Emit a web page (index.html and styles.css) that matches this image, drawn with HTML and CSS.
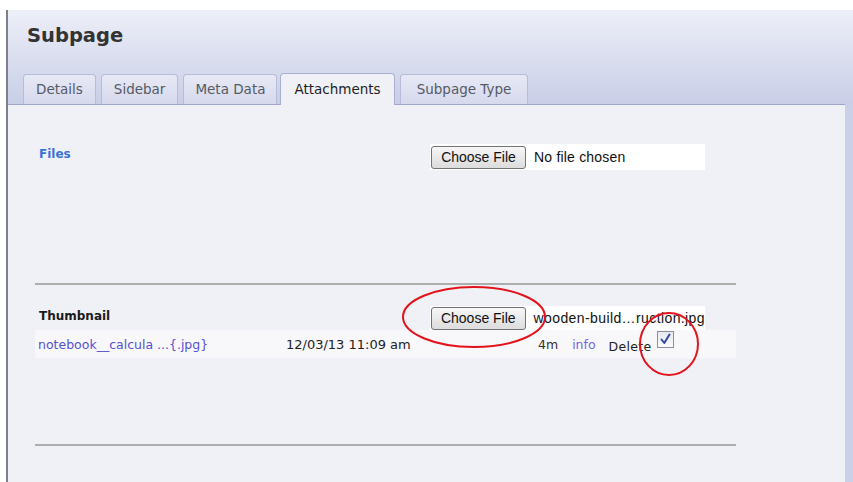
FILE: index.html
```html
<!DOCTYPE html>
<html lang="en">
<head>
<meta charset="utf-8">
<title>Subpage</title>
<link rel="stylesheet" href="styles.css">
</head>
<body>
<div class="page">
  <div class="panel">
    <header class="panel-head">
      <h1 class="title">Subpage</h1>
      <nav class="tabs">
        <a class="tab">Details</a>
        <a class="tab">Sidebar</a>
        <a class="tab">Meta Data</a>
        <a class="tab tab-active">Attachments</a>
        <a class="tab">Subpage Type</a>
      </nav>
    </header>
    <main class="panel-body">
      <section class="field field-files">
        <div class="field-row">
          <span class="field-label field-label-link">Files</span>
          <div class="file-input">
            <button class="file-btn" type="button">Choose File</button>
            <span class="file-name">No file chosen</span>
          </div>
        </div>
      </section>
      <hr class="rule rule-files">
      <section class="field field-thumb">
        <div class="field-row">
          <span class="field-label">Thumbnail</span>
          <div class="file-input file-input-short">
            <button class="file-btn" type="button">Choose File</button>
            <span class="file-name file-name-long">wooden-build…ruction.jpg</span>
          </div>
        </div>
        <div class="att-row">
          <a class="att-name">notebook__calcula ...{.jpg}</a>
          <span class="att-date">12/03/13 11:09 am</span>
          <span class="att-size">4m</span>
          <a class="att-info">info</a>
          <span class="att-delete">Delete</span>
          <span class="checkbox checked">
            <svg viewBox="0 0 15 15" width="15" height="15"><path d="M3.5 7.5 L6.3 11 L11.5 2.5" fill="none" stroke="#3448a8" stroke-width="2" stroke-linecap="round" stroke-linejoin="round"/></svg>
          </span>
        </div>
      </section>
      <hr class="rule rule-thumb">
    </main>
  </div>
</div>
<svg class="marks" viewBox="0 0 853 482" width="853" height="482">
  <ellipse cx="474" cy="317" rx="71" ry="30" fill="none" stroke="#e3131b" stroke-width="2"/>
  <ellipse cx="669" cy="344" rx="29" ry="31" fill="none" stroke="#e3131b" stroke-width="2"/>
</svg>
</body>
</html>
```

FILE: styles.css
```css
html, body {
  margin: 0;
  height: 100%;
  background: #fff;
}

body {
  position: relative;
  overflow: hidden;
  font-family: "DejaVu Sans", "Liberation Sans", sans-serif;
  color: #222;
}

.page {
  box-sizing: border-box;
  height: 482px;
  padding: 10px 0 0 6px;
}

.panel {
  height: 100%;
  display: flex;
  flex-direction: column;
  border-left: 2px solid #7b8189;
  background: #cbd0e9;
}

/* header with title and tab strip */
.panel-head {
  height: 94px;
  display: flex;
  flex-direction: column;
  padding-left: 15px;
  background: linear-gradient(#edeff8, #c9cee7);
}

.title {
  margin: 14px 0 0 4px;
  font-size: 19.5px;
  line-height: 24px;
  font-weight: bold;
  color: #333;
}

.tabs {
  margin-top: auto;
  display: flex;
  align-items: flex-end;
  gap: 5px;
  position: relative;
  z-index: 1;
}

.tab {
  box-sizing: border-box;
  height: 30px;
  padding: 0 12px;
  line-height: 29px;
  font-size: 13.5px;
  color: #555a64;
  border: 1px solid #b7bcd9;
  border-bottom: none;
  border-radius: 4px 4px 0 0;
  background: linear-gradient(#e7e9f5, #d6d9ed);
}

.tab:nth-child(3) {
  padding: 0 11px;
}

.tab:nth-child(5) {
  margin-left: 1px;
  padding: 0 16px;
}

.tab-active {
  height: 32px;
  margin: 0 -1px -1px -2px;
  line-height: 31px;
  padding: 0 13px;
  color: #1e1e1e;
  border-color: #a9afd1;
  background: #f0f1f7;
}

/* content area */
.panel-body {
  flex: 1;
  margin-right: 8px;
  padding-left: 27px;
  background: #f0f1f7;
  border-top: 1px solid #a0a6ca;
}

.field {
  width: 701px;
}

.field-row {
  display: flex;
  align-items: flex-start;
}

.field-files .field-row {
  margin-top: 39px;
}

.field-thumb .field-row {
  margin-top: 21px;
}

.field-label {
  box-sizing: border-box;
  width: 395px;
  padding: 2px 0 0 4px;
  font-size: 12px;
  line-height: 16px;
  font-weight: bold;
  color: #1a1a1a;
}

.field-label-link {
  color: #3a72d8;
}

.file-input {
  box-sizing: border-box;
  width: 275px;
  height: 26px;
  display: flex;
  align-items: center;
  gap: 8px;
  padding-left: 1px;
  background: #fff;
  font-family: "Liberation Sans", Arial, sans-serif;
  font-size: 14px;
  color: #111;
  white-space: nowrap;
}

.file-input-short {
  height: 24px;
}

.file-name {
  letter-spacing: 0.2px;
}

.file-name-long {
  letter-spacing: 0.4px;
}

.file-btn {
  box-sizing: border-box;
  width: 95px;
  height: 23px;
  padding: 0;
  border: 1px solid #737373;
  border-radius: 3px;
  background: linear-gradient(#f7f7f7, #dcdcdc);
  font-family: "Liberation Sans", Arial, sans-serif;
  font-size: 14px;
  color: #111;
}

.rule {
  width: 701px;
  height: 0;
  margin: 0;
  border: 0;
  border-top: 2px solid #adadad;
}

.rule-files {
  margin-top: 113px;
}

.rule-thumb {
  margin-top: 86px;
}

/* attachment listing row */
.att-row {
  height: 28px;
  display: flex;
  align-items: center;
  padding-left: 3px;
  background: #f8f8fb;
  font-size: 12.5px;
  white-space: nowrap;
}

.att-name {
  width: 248px;
  color: #5750d4;
}

.att-date {
  width: 252px;
  font-size: 13px;
  color: #222;
}

.att-size {
  margin-right: 14px;
  color: #333;
}

.att-info {
  margin-right: 13px;
  color: #7466e0;
}

.att-delete {
  padding-top: 5px;
  font-size: 12.5px;
  letter-spacing: 0.3px;
  color: #222;
}

.checkbox {
  box-sizing: border-box;
  width: 17px;
  height: 17px;
  margin: -10px 0 0 6px;
  display: flex;
  align-items: center;
  justify-content: center;
  border: 1px solid #8d8e9c;
  background: linear-gradient(#e8e9ef, #fbfbfd);
}

.checkbox svg {
  display: block;
}

/* hand-drawn highlight marks over the form */
.marks {
  position: absolute;
  top: 0;
  left: 0;
  pointer-events: none;
}
```
